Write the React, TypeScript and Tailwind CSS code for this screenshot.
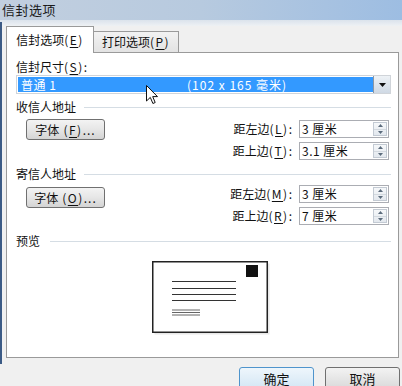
import React from "react";

// Word "信封选项" dialog (Windows 7 look), drawn at 402x386.

const Key = ({ c, cls = "" }: { c: string; cls?: string }) => (
  <span className={`tracking-[1.5px] ${cls}`}>
    (<span className="underline underline-offset-2">{c}</span>)
  </span>
);

function Group({ title, gap }: { title: string; gap: string }) {
  return (
    <div className={`flex h-[14px] items-center ${gap} pr-[6px]`}>
      <span className="leading-[14px]">{title}</span>
      <div className="h-px flex-1 bg-[#d5dde4]" />
    </div>
  );
}

function Spin() {
  return (
    <div className="my-px mr-px flex w-[14px] flex-col border border-[#c3cad3] bg-gradient-to-b from-[#f6f8fa] to-[#e3e8ee]">
      <div className="flex flex-1 items-center justify-center border-b border-[#d3d9df]">
        <svg width="5" height="3" viewBox="0 0 5 3">
          <path d="M0 3 L2.5 0 L5 3 Z" fill="#5b6b7c" />
        </svg>
      </div>
      <div className="flex flex-1 items-center justify-center">
        <svg width="5" height="3" viewBox="0 0 5 3">
          <path d="M0 0 L2.5 3 L5 0 Z" fill="#5b6b7c" />
        </svg>
      </div>
    </div>
  );
}

function Field({ label, k, value }: { label: string; k: string; value: string }) {
  return (
    <div className="flex h-[18px] items-center justify-end gap-[4px]">
      <span className="leading-[14px]">
        {label}
        <Key c={k} />
        <span className="pr-[3px]">:</span>
      </span>
      <div className="flex h-[18px] w-[90px] items-stretch border border-[#abadb3] bg-white">
        <span className="flex-1 pl-[2px] leading-[16px] tracking-[0.5px]">{value}</span>
        <Spin />
      </div>
    </div>
  );
}

function FontButton({ k, cls }: { k: string; cls: string }) {
  return (
    <div
      className={`ml-[10px] flex h-[21px] w-[79px] items-center justify-center rounded-[3px] border border-[#707070] bg-gradient-to-b from-[#f3f3f3] via-[#e6e6e6] to-[#d4d4d4] leading-[14px] ${cls}`}
    >
      <span>字体</span>
      <Key c={k} cls="ml-[4px]" />
      <span className="tracking-[1px]">...</span>
    </div>
  );
}

function Envelope() {
  return (
    <svg width="118" height="74" viewBox="0 0 118 74" className="ml-[136px] mt-[13px]">
      <rect x="2.5" y="2.5" width="115" height="71" fill="#d9d9d9" opacity="0.6" />
      <rect x="0.75" y="0.75" width="114.5" height="70.5" fill="#fff" stroke="#222" strokeWidth="1.5" />
      <rect x="94" y="4" width="12" height="12" fill="#111" />
      {[20, 27, 33, 39].map((y) => (
        <line key={y} x1="20" x2="84" y1={y + 0.5} y2={y + 0.5} stroke="#333" strokeWidth="1" />
      ))}
      {[49, 51.5, 54].map((y) => (
        <line key={y} x1="20" x2="48" y1={y} y2={y} stroke="#555" strokeWidth="0.9" />
      ))}
    </svg>
  );
}

export default function App() {
  return (
    <div className="relative h-[386px] w-[402px] overflow-hidden bg-[#f0f0f0] text-[12px] text-[#111] font-['Noto_Sans_CJK_SC',sans-serif]">
      {/* title bar */}
      <div className="h-[20px] bg-gradient-to-r from-[#c2cfdf] via-[#b7cadf] to-[#9dbde2] pl-[2px] pt-[2px] text-[13px] leading-[16px] tracking-[0.5px] text-[#1a1a1a]">
        信封选项
      </div>
      <div className="h-[6px] bg-gradient-to-b from-[#dbe3ec] to-[#eef1f4]" />

      {/* tabs */}
      <div className="relative z-10 -mb-px flex h-[27px] items-end pl-[6px]">
        <div className="flex h-[27px] w-[88px] items-center justify-center border-x border-t border-[#9a9a9a] bg-white leading-[14px]">
          信封选项<Key c="E" />
        </div>
        <div className="flex h-[22px] w-[85px] items-center justify-center border-y border-r border-[#9a9a9a] bg-gradient-to-b from-[#f2f2f2] to-[#e3e3e3] leading-[14px]">
          打印选项<Key c="P" />
        </div>
      </div>

      {/* tab panel */}
      <div className="ml-[6px] mr-[3px] h-[306px] border border-[#9a9a9a] bg-white pl-[9px] pr-[1px]">
        <div className="mt-[7px] leading-[14px]">
          信封尺寸<Key c="S" />:
        </div>
        <div className="mt-px mr-[6px] flex h-[19px] border border-[#d0d4d9] bg-white">
          <div className="my-px ml-px flex flex-1 items-center bg-[#3399ff] pl-[3px] leading-[14px] text-white">
            <span className="w-[166px] tracking-[0.5px]">普通 1</span>
            <span className="tracking-[1px]">(102 x 165 毫米)</span>
          </div>
          <div className="flex w-[17px] items-center justify-center border-l border-[#8a97a6] bg-gradient-to-b from-[#eef2f6] to-[#cfd9e4]">
            <svg width="7" height="4" viewBox="0 0 7 4">
              <path d="M0 0 L7 0 L3.5 4 Z" fill="#111" />
            </svg>
          </div>
        </div>

        <div className="mt-[6px]">
          <Group title="收信人地址" gap="gap-[8px]" />
        </div>
        <div className="flex items-start justify-between pr-[8px]">
          <FontButton k="F" cls="mt-[5px]" />
          <div className="mt-[6px] flex flex-col gap-[4px]">
            <Field label="距左边" k="L" value="3 厘米" />
            <Field label="距上边" k="T" value="3.1 厘米" />
          </div>
        </div>

        <div className="mt-[7px]">
          <Group title="寄信人地址" gap="gap-[8px]" />
        </div>
        <div className="flex items-start justify-between pr-[8px]">
          <FontButton k="O" cls="mt-[6px]" />
          <div className="mt-[4px] flex flex-col gap-[4px]">
            <Field label="距左边" k="M" value="3 厘米" />
            <Field label="距上边" k="R" value="7 厘米" />
          </div>
        </div>

        <div className="mt-[9px]">
          <Group title="预览" gap="gap-[10px]" />
        </div>
        <Envelope />
      </div>

      {/* dialog buttons */}
      <div className="mt-[9px] flex justify-end gap-[11px] pr-[2px]">
        <div className="flex h-[23px] w-[75px] items-center justify-center rounded-[3px] border border-[#4f94cc] bg-gradient-to-b from-[#eef6fc] to-[#d3e6f4] text-[13px] leading-[14px]">
          确定
        </div>
        <div className="flex h-[23px] w-[75px] items-center justify-center rounded-[3px] border border-[#707070] bg-gradient-to-b from-[#f3f3f3] to-[#d9d9d9] text-[13px] leading-[14px]">
          取消
        </div>
      </div>

      {/* window frame edge */}
      <div className="absolute left-0 top-[22px] h-[342px] w-[2px] bg-[#3b5a85]" />

      {/* mouse pointer */}
      <svg width="13" height="20" viewBox="0 0 13 20" className="absolute left-[146px] top-[85px]">
        <path
          d="M0.5 0.5 L0.5 16 L4.3 12.4 L6.9 18.5 L9.2 17.5 L6.7 11.6 L11.5 11.6 Z"
          fill="#fff"
          stroke="#111"
          strokeWidth="1"
          strokeLinejoin="round"
        />
      </svg>
    </div>
  );
}
